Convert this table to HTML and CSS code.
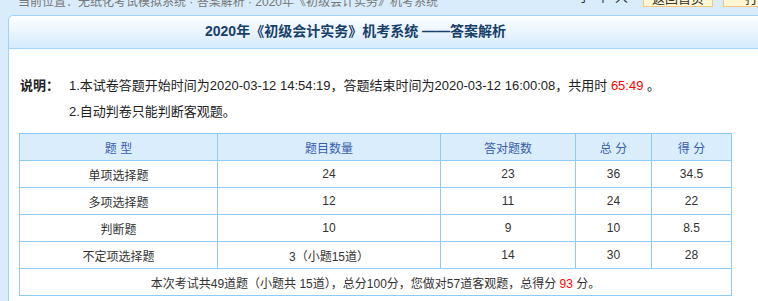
FILE: index.html
```html
<!DOCTYPE html>
<html lang="zh">
<head>
<meta charset="utf-8">
<title>答案解析</title>
<link rel="stylesheet" href="styles.css">
</head>
<body>
<div class="topbar">
  <div class="crumb">当前位置：无纸化考试模拟系统 · 答案解析 · 2020年《初级会计实务》机考系统</div>
  <div class="tools">
    <span class="sizes">小 中 大</span>
    <span class="btn">返回首页</span>
    <span class="btn">打印</span>
  </div>
</div>
<div class="panel">
  <div class="panel-head">2020年《初级会计实务》机考系统 ——答案解析</div>
  <div class="panel-body">
    <div class="note">
      <div class="note-label">说明：</div>
      <div class="note-lines">
        <div>1.本试卷答题开始时间为2020-03-12 14:54:19，答题结束时间为2020-03-12 16:00:08，共用时 <span class="red">65:49</span> 。</div>
        <div>2.自动判卷只能判断客观题。</div>
      </div>
    </div>
    <table class="score">
      <colgroup>
        <col class="c1"><col class="c2"><col class="c3"><col class="c4"><col class="c5">
      </colgroup>
      <thead>
        <tr><th>题 型</th><th>题目数量</th><th>答对题数</th><th>总 分</th><th>得 分</th></tr>
      </thead>
      <tbody>
        <tr><td>单项选择题</td><td>24</td><td>23</td><td>36</td><td>34.5</td></tr>
        <tr><td>多项选择题</td><td>12</td><td>11</td><td>24</td><td>22</td></tr>
        <tr><td>判断题</td><td>10</td><td>9</td><td>10</td><td>8.5</td></tr>
        <tr><td>不定项选择题</td><td>3（小题15道）</td><td>14</td><td>30</td><td>28</td></tr>
        <tr><td colspan="5">本次考试共49道题（小题共 15道），总分100分，您做对57道客观题，总得分 <span class="red">93</span> 分。</td></tr>
      </tbody>
    </table>
  </div>
</div>
</body>
</html>
```

FILE: styles.css
```css
html, body {
  margin: 0;
  padding: 0;
}
body {
  background: #d8ecfb;
  font-family: "Liberation Sans", "Noto Sans CJK SC", sans-serif;
  color: #333;
  overflow: hidden;
  height: 301px;
}
.topbar {
  display: flex;
  justify-content: space-between;
  align-items: center;
  height: 24px;
  margin-top: -12px;
  padding-left: 18px;
  font-size: 12px;
  color: #777;
  white-space: nowrap;
}
.tools {
  display: flex;
  align-items: flex-start;
  gap: 10px;
  align-self: flex-start;
  height: 20px;
  margin-right: -35px;
}
.sizes {
  margin-right: 5px;
  color: #333;
  font-size: 13px;
  line-height: 18px;
  word-spacing: 2px;
}
.btn {
  display: inline-flex;
  align-items: center;
  justify-content: center;
  box-sizing: border-box;
  height: 19px;
  width: 70px;
  background: #fff8d2;
  border: 1px solid #f6c582;
  color: #333;
  font-size: 13px;
}
.panel {
  margin: 3px 0 0 8px;
  width: 800px;
  background: #fff;
  border: 1px solid #9fd3f7;
  border-top-left-radius: 5px;
  height: 320px;
}
.panel-head {
  height: 32px;
  line-height: 30px;
  border-bottom: 1px solid #9fd3f7;
  background: linear-gradient(#ffffff, #d4eafc);
  border-top-left-radius: 5px;
  padding-left: 196px;
  font-size: 14px;
  font-weight: bold;
  color: #17406a;
}
.panel-body {
  padding: 24px 0 0 10px;
}
.note {
  display: flex;
  font-size: 13px;
  color: #222;
  line-height: 26px;
}
.note-label {
  font-weight: bold;
  width: 49px;
  padding-left: 1px;
}
.red {
  color: #ff0000;
}
.score {
  margin-top: 8px;
  width: 712px;
  border-collapse: collapse;
  table-layout: fixed;
  font-size: 12px;
  color: #333;
}
.c1 { width: 198px; }
.c2 { width: 223px; }
.c3 { width: 135px; }
.c4 { width: 76px; }
.c5 { width: 80px; }
.score th, .score td {
  border: 1px solid #8dcbf6;
  height: 26px;
  padding: 0;
  text-align: center;
  font-weight: normal;
}
.score th {
  background: #d9edfd;
  color: #3a5dad;
}
```
